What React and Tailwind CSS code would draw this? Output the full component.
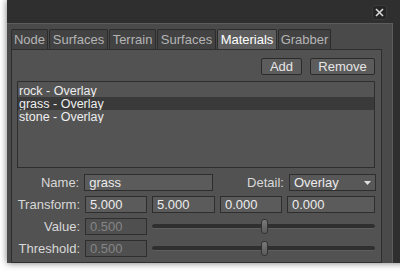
const tabs = [
  { label: "Node", w: "w-[37px]" },
  { label: "Surfaces", w: "w-[59px]" },
  { label: "Terrain", w: "w-[47px]" },
  { label: "Surfaces", w: "w-[59px]" },
  { label: "Materials", w: "w-[60px]", active: true },
  { label: "Grabber", w: "w-[53px]" },
];

const materials = ["rock - Overlay", "grass - Overlay", "stone - Overlay"];

function Field({ value, w, disabled }) {
  return (
    <div
      className={`${w} h-[17px] flex items-center px-[4px] border border-[#2e2e2e] ${
        disabled ? "bg-[#4f4f4f] text-[#858585]" : "bg-[#5b5b5b] text-[#ececec]"
      }`}
    >
      {value}
    </div>
  );
}

function Slider({ pos }) {
  return (
    <div className="relative flex-1 h-[17px] flex items-center">
      <div className="w-full h-[5px] rounded-full bg-[#2f2f2f] border-b border-[#5f5f5f]" />
      <div
        className="absolute top-[1px] w-[7px] h-[15px] rounded-[3px] border border-[#333] bg-gradient-to-b from-[#7a7a7a] to-[#5a5a5a]"
        style={{ left: pos }}
      />
    </div>
  );
}

function Label({ children }) {
  return <div className="w-[63px] text-right text-[#d8d8d8]">{children}</div>;
}

export default function App() {
  return (
    <div className="w-[400px] h-[271px] overflow-hidden bg-white font-['Liberation_Sans',Arial,sans-serif] text-[13px] leading-none">
      <div className="ml-[7px] w-[400px] h-[263px] bg-[#2f2f2f] shadow-[0_0_7px_rgba(0,0,0,0.55)] flex flex-col">
        {/* title bar */}
        <div className="h-[23px] flex items-start justify-end pr-[20px] pt-[5px]">
          <div className="w-[15px] h-[15px] rounded-[3px] bg-[#262626] border border-[#3a3a3a] flex items-center justify-center">
            <svg width="9" height="9" viewBox="0 0 9 9">
              <path d="M1 1L8 8M8 1L1 8" stroke="#d8d8d8" strokeWidth="1.6" />
            </svg>
          </div>
        </div>

        {/* body */}
        <div className="w-[386px] flex-1 bg-[#4a4a4a] border-t border-r border-[#5c5c5c] pl-[4px] pt-[5px] flex flex-col">
          <div className="flex gap-[1px] h-[20px]">
            {tabs.map((t, i) => (
              <div
                key={i}
                className={`${t.w} h-[20px] flex items-center justify-center rounded-t-[2px] border border-b-0 border-[#2c2c2c] ${
                  t.active ? "bg-[#5d5d5d] text-white" : "bg-[#424242] text-[#b4b4b4]"
                }`}
              >
                {t.label}
              </div>
            ))}
          </div>

          <div className="w-[371px] flex-1 bg-[#525252] border border-[#2e2e2e] px-[5px] pt-[8px] flex flex-col">
            <div className="flex justify-end gap-[8px] pr-[1px]">
              <button className="w-[41px] h-[17px] rounded-[2px] border border-[#2a2a2a] bg-[#5c5c5c] text-[#e6e6e6] leading-none">
                Add
              </button>
              <button className="w-[65px] h-[17px] rounded-[2px] border border-[#2a2a2a] bg-[#5c5c5c] text-[#e6e6e6] leading-none">
                Remove
              </button>
            </div>

            <div className="mt-[6px] mr-[1px] h-[87px] bg-[#545454] border border-[#2e2e2e] pt-[2px] text-[#eeeeee]">
              {materials.map((m, i) => (
                <div key={m} className={`h-[13px] pl-[1px] flex items-center overflow-hidden ${i === 1 ? "bg-[#3a3a3a]" : ""}`}>
                  <span className="text-[12.5px] leading-[12px]">{m}</span>
                </div>
              ))}
            </div>

            <div className="mt-[6px] flex flex-col gap-[5px]">
              <div className="flex items-center gap-[5px]">
                <Label>Name:</Label>
                <Field value="grass" w="w-[130px]" />
                <div className="w-[67px] text-right text-[#d8d8d8]">Detail:</div>
                <div className="w-[88px] h-[17px] flex items-center justify-between px-[4px] border border-[#2e2e2e] bg-[#585858] text-[#ececec]">
                  <span>Overlay</span>
                  <svg width="7" height="4" viewBox="0 0 7 4">
                    <path d="M0 0H7L3.5 4Z" fill="#e0e0e0" />
                  </svg>
                </div>
              </div>
              <div className="flex items-center gap-[5px]">
                <Label>Transform:</Label>
                <Field value="5.000" w="w-[62px]" />
                <Field value="5.000" w="w-[63px]" />
                <Field value="0.000" w="w-[62px]" />
                <Field value="0.000" w="w-[88px]" />
              </div>
              <div className="flex items-center gap-[5px]">
                <Label>Value:</Label>
                <Field value="0.500" w="w-[62px]" disabled />
                <div className="flex-1 pr-[1px] flex">
                  <Slider pos={109} />
                </div>
              </div>
              <div className="flex items-center gap-[5px]">
                <Label>Threshold:</Label>
                <Field value="0.500" w="w-[62px]" disabled />
                <div className="flex-1 pr-[1px] flex">
                  <Slider pos={109} />
                </div>
              </div>
            </div>
          </div>
        </div>
      </div>
    </div>
  );
}
